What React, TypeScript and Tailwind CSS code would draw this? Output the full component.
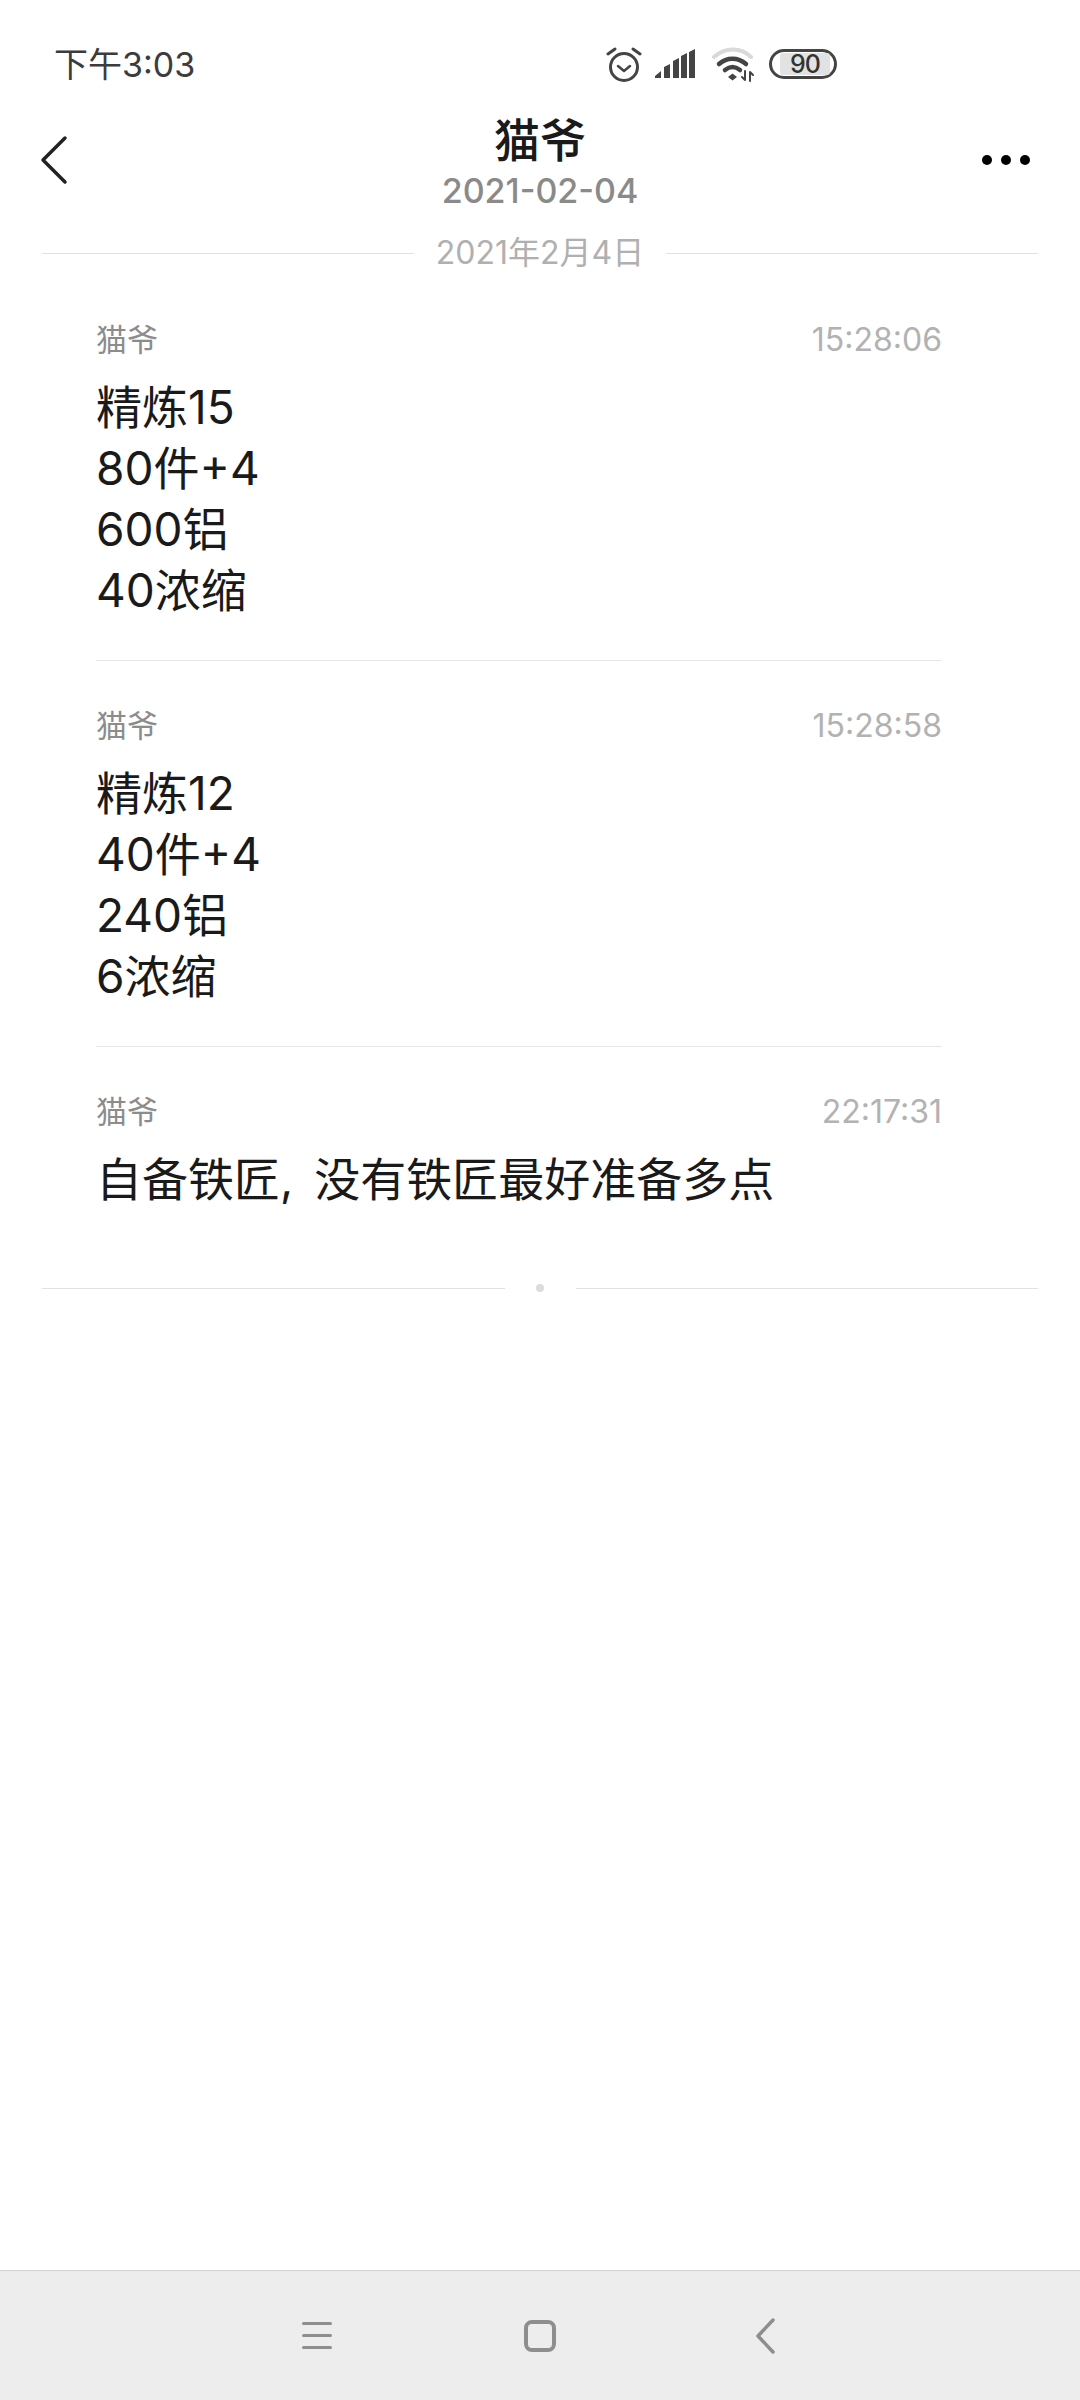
const FONT = "font-['Inter','Noto_Sans_CJK_SC',sans-serif]";

const MESSAGES = [
  { id: "1", time: "15:28:06", lines: ["精炼15", "80件+4", "600铝", "40浓缩"] },
  { id: "2", time: "15:28:58", lines: ["精炼12", "40件+4", "240铝", "6浓缩"] },
  { id: "3", time: "22:17:31", lines: ["自备铁匠, 没有铁匠最好准备多点"] },
];

function StatusIcons() {
  return (
    <div className="mb-[5px] flex items-center">
      {/* alarm */}
      <svg width="36" height="36" viewBox="0 0 36 36" fill="none" stroke="#444" strokeWidth="3" strokeLinecap="round" className="mr-[13px]">
        <circle cx="18" cy="21" r="13.5" />
        <path d="M12 20l6 5 6-5" strokeWidth="2.5" strokeLinejoin="round" />
        <path d="M2 8l7-5M34 8l-7-5" />
      </svg>
      {/* signal */}
      <svg width="40" height="30" viewBox="0 0 40 30" fill="#444" className="mr-[17px]">
        <path d="M0 29v-2l6-5v7zM9 29V18l6-3v14zM18 29V12l6-3v20zM26 29V7l6-3v25zM34 29V3l6-3v29z" />
      </svg>
      {/* wifi */}
      <svg width="44" height="36" viewBox="0 0 44 36" fill="none" strokeLinecap="round" className="mr-[13px]">
        <path d="M2 11C13 1 29 1 39 11" stroke="#d9d9d9" strokeWidth="4" />
        <path d="M7 18c8-7 19-7 27 0" stroke="#444" strokeWidth="4.500" />
        <path d="M13 24c5-4 10-4 15 0" stroke="#444" strokeWidth="4.500" />
        <path d="M16 31l4.500-3.500 4.500 3.500-4.500 3.500z" fill="#444" stroke="none" />
        <path d="M33 25v9M33 34l-3-3M38 35v-9M38 26l3 3" stroke="#444" strokeWidth="2" />
      </svg>
      {/* battery */}
      <div className="flex h-[30px] w-[68px] items-center rounded-full border-[3px] border-[#444] pl-[8px]">
        <div className="flex h-[22px] w-[50px] items-center justify-center rounded-[3px] bg-[#e2e2e2] text-[25px] leading-none font-medium tracking-[-1px] text-[#333]">
          90
        </div>
      </div>
    </div>
  );
}

function Divider({ label }: { label: string }) {
  return (
    <div className="mx-[42px] flex items-center">
      <div className="h-px flex-1 bg-[#e2e2e2]" />
      {label ? (
        <span className="px-[22px] text-[32px] leading-[40px] text-[#b0b0b0]">{label}</span>
      ) : (
        <div className="flex w-[71px] justify-center">
          <div className="size-[8px] rounded-full bg-[#dcdcdc]" />
        </div>
      )}
      <div className="h-px flex-1 bg-[#e2e2e2]" />
    </div>
  );
}

export default function App() {
  return (
    <div className={`${FONT} flex h-[2400px] w-[1080px] flex-col bg-white`}>
      {/* Status bar */}
      <div className="flex h-[87px] items-end justify-between pr-[243px] pl-[54px]">
        <span className="text-[34px] leading-[44px] text-[#3c3c3c]">下午3:03</span>
        <StatusIcons />
      </div>

      {/* Header */}
      <div className="relative flex h-[119px] flex-col items-center pt-[26px]">
        <svg width="28" height="50" viewBox="0 0 28 50" fill="none" stroke="#222" strokeWidth="3.500" strokeLinecap="round" strokeLinejoin="round" className="absolute top-[48px] left-[40px]">
          <path d="M25 3L3 25l22 22" />
        </svg>
        <div className="text-[46px] leading-[54px] font-medium text-[#1a1a1a]">猫爷</div>
        <div className="mt-[5px] text-[34px] leading-[38px] font-medium text-[#8a8a8a]">2021-02-04</div>
        <div className="absolute top-[68px] right-[50px] flex gap-[9px]">
          <div className="size-[10px] rounded-full bg-black" />
          <div className="size-[10px] rounded-full bg-black" />
          <div className="size-[10px] rounded-full bg-black" />
        </div>
      </div>

      <div className="mt-[27px]">
        <Divider label="2021年2月4日" />
      </div>

      {/* Messages */}
      <div className="mx-[96px] mt-[2px] w-[846px]">
        {MESSAGES.map((m, i) => (
          <div key={m.id} className={i < MESSAGES.length - 1 ? "h-[386px] border-b border-[#e6e6e6] pt-[45px]" : "h-[237px] pt-[45px]"}>
            <div className="flex items-center justify-between">
              <span className="text-[31px] leading-[40px] text-[#8c8c8c]">猫爷</span>
              <span className="text-[32px] leading-[40px] text-[#b2b2b2]">{m.time}</span>
            </div>
            <div className="mt-[17px] text-[46px] leading-[61px] text-[#1a1a1a] [word-spacing:8px]">
              {m.lines.map((line) => (
                <div key={line}>{line}</div>
              ))}
            </div>
          </div>
        ))}
      </div>

      <Divider label="" />

      {/* Navigation bar */}
      <div className="mt-auto flex h-[130px] items-center border-t border-[#d4d4d4] bg-[#ededed] pl-[302px]">
        <div className="mr-[192px] flex w-[30px] flex-col gap-[9px]">
          <div className="h-[3px] rounded-full bg-[#8e8e8e]" />
          <div className="h-[3px] rounded-full bg-[#8e8e8e]" />
          <div className="h-[3px] rounded-full bg-[#8e8e8e]" />
        </div>
        <div className="mr-[199px] size-[32px] rounded-[8px] border-[4px] border-[#8e8e8e]" />
        <svg width="20" height="36" viewBox="0 0 20 36" fill="none" stroke="#8e8e8e" strokeWidth="3.500" strokeLinecap="round" strokeLinejoin="round">
          <path d="M18 2L3 18l15 16" />
        </svg>
      </div>
    </div>
  );
}
